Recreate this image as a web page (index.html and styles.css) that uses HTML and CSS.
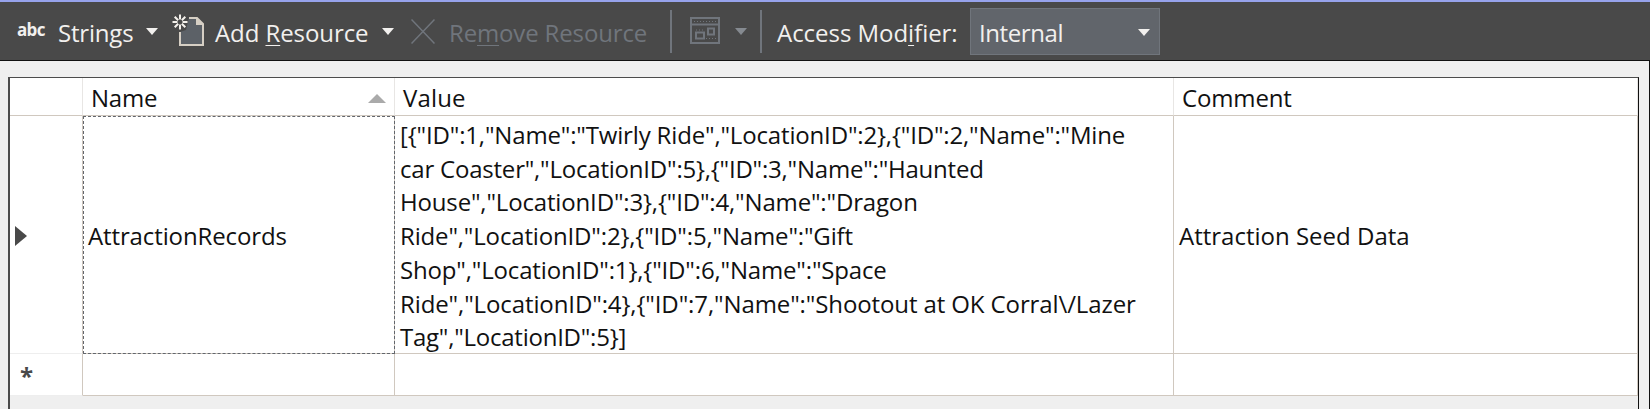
FILE: index.html
```
<!DOCTYPE html>
<html lang="en">
<head>
<meta charset="utf-8">
<title>Resources</title>
<link rel="stylesheet" href="styles.css">
</head>
<body>
<div class="window">
  <header class="toolbar">
    <span class="abc">abc</span>
    <span class="label strings">Strings</span>
    <svg class="caret caret-strings" width="12" height="7" viewBox="0 0 12 7"><path d="M0 0h12L6 7z"/></svg>
    <svg class="icon-add" width="34" height="34" viewBox="0 0 34 34">
      <path d="M8 18V31.500H31V10L25 3.500H17L14 16z" fill="#5c6167" stroke="none"/>
      <path d="M8 18V31H31V10L25 4H17" fill="none" stroke="#d6cfc4" stroke-width="2"/>
      <path d="M24 3l8 8h-8z" fill="#d6cfc4"/>
      <path d="M8 0.500v5M8 10.500v5M0.500 8h5M10.500 8h5M2.700 2.700l3.500 3.500M9.800 9.800l3.500 3.500M13.300 2.700L9.800 6.200M6.200 9.800L2.700 13.300" fill="none" stroke="#f4f1ec" stroke-width="2"/>
    </svg>
    <span class="label add">Add <u>R</u>esource</span>
    <svg class="caret caret-add" width="12" height="7" viewBox="0 0 12 7"><path d="M0 0h12L6 7z"/></svg>
    <svg class="icon-remove" width="24" height="25" viewBox="0 0 24 25"><path d="M0.500 0.500l23 24M23.500 0.500l-23 24"/></svg>
    <span class="label remove">Re<u>m</u>ove Resource</span>
    <span class="separator sep-one"></span>
    <svg class="icon-view" width="30" height="27" viewBox="0 0 30 27">
      <path d="M1 1h28v25H1zM1 7.500h28"/>
      <path d="M6 15.500h8v6H6zM18 11.500h6v6h-6z"/>
      <path d="M4 4.500h22M6 13h8M16 21.500h10" stroke-width="1" stroke-dasharray="1 2"/>
    </svg>
    <svg class="caret caret-view" width="12" height="7" viewBox="0 0 12 7"><path d="M0 0h12L6 7z"/></svg>
    <span class="separator sep-two"></span>
    <span class="label access">Access Mod<u>i</u>fier:</span>
    <div class="combo"><span class="label internal">Internal</span><svg class="caret" width="12" height="7" viewBox="0 0 12 7"><path d="M0 0h12L6 7z"/></svg></div>
  </header>
  <main class="content">
    <div class="grid">
      <div class="cell head"></div>
      <div class="cell head"><span class="t-name">Name</span><svg class="sort" width="18" height="9" viewBox="0 0 18 9"><path d="M0 9h18L9 0z"/></svg></div>
      <div class="cell head"><span class="t-value">Value</span></div>
      <div class="cell head last"><span class="t-comment">Comment</span></div>

      <div class="cell row marker"><svg width="12" height="20" viewBox="0 0 12 20"><path d="M0 0v20L12 10z"/></svg></div>
      <div class="cell row selected"><span class="t-records">AttractionRecords</span></div>
      <div class="cell row value">
        <span class="l1">[{"ID":1,"Name":"Twirly Ride","LocationID":2},{"ID":2,"Name":"Mine</span>
        <span class="l2">car Coaster","LocationID":5},{"ID":3,"Name":"Haunted</span>
        <span class="l3">House","LocationID":3},{"ID":4,"Name":"Dragon</span>
        <span class="l4">Ride","LocationID":2},{"ID":5,"Name":"Gift</span>
        <span class="l5">Shop","LocationID":1},{"ID":6,"Name":"Space</span>
        <span class="l6">Ride","LocationID":4},{"ID":7,"Name":"Shootout at OK Corral\/Lazer</span>
        <span class="l7">Tag","LocationID":5}]</span>
      </div>
      <div class="cell row last"><span class="t-seed">Attraction Seed Data</span></div>

      <div class="cell new marker star">*</div>
      <div class="cell new"></div>
      <div class="cell new"></div>
      <div class="cell new last"></div>
    </div>
  </main>
</div>
</body>
</html>
```

FILE: styles.css
```
* { box-sizing: border-box; }
body { margin: 0; font-family: "Open Sans", "Noto Sans", sans-serif; font-size: 24px; color: #111; }
.window { width: 1650px; height: 409px; overflow: hidden; background: #efefef; display: flex; flex-direction: column; }
.toolbar { height: 61px; flex: none; display: flex; align-items: flex-start; background: #494949; border-top: 2px solid #97a3ec; border-bottom: 1px solid #111; color: #f2f0ee; white-space: nowrap; }
.toolbar > * { flex: none; }
.label { line-height: 32px; margin-top: 15px; }
u { text-decoration-thickness: 1px; text-underline-offset: 3px; }
.abc { width: 41px; margin: 15px 0 0 17px; font-size: 17px; font-weight: 700; line-height: 26px; letter-spacing: -0.7px; }
.strings { width: 88px; letter-spacing: -0.2px; }
.caret { fill: #f2f0ee; margin-top: 26px; }
.icon-add { margin: 12px 0 0 14px; }
.add { width: 167px; margin-left: 9px; letter-spacing: -0.08px; }
.icon-remove { margin: 17px 0 0 17px; stroke: #70757c; stroke-width: 1.5; }
.remove { width: 221px; margin-left: 14px; color: #70757c; letter-spacing: -0.15px; }
.separator { width: 2px; height: 43px; margin-top: 8px; background: #70757c; }
.icon-view { margin: 15px 0 0 18px; fill: none; stroke: #70757c; stroke-width: 2; }
.caret-view { margin-left: 15px; fill: #858a90; }
.sep-two { margin-left: 13px; }
.access { width: 193px; margin-left: 15px; letter-spacing: -0.04px; }
.combo { width: 190px; height: 47px; margin-top: 6px; display: flex; justify-content: space-between; padding: 0 9px 0 8px; background: #61656b; border: 1px solid #70757c; }
.combo .label { margin-top: 8px; }
.combo .caret { margin-top: 20px; }
.internal { letter-spacing: -0.4px; }
.content { flex: 1; padding: 16px 10px 0 8px; border-right: 1px solid #111; }
.grid { height: 332px; display: grid; grid-template-columns: 73px 312px 779px 1fr; grid-template-rows: 38px 238px 42px; background: #efefef; border: 2px solid #4b4b4b; border-width: 1px 1px 0 2px; border-right-color: #111; }
.cell { background: #fff; border-right: 1px solid #d0c8bf; border-bottom: 1px solid #d0c8bf; display: flex; align-items: center; white-space: nowrap; line-height: 32px; }
.head { padding: 3px 0 0 8px; border-right-color: #e8e6e4; }
.row { padding: 3px 0 0 5px; }
.marker { padding-left: 5px; border-bottom-color: #eee; fill: #494949; }
.selected { outline: 1px dashed #62666c; outline-offset: -1px; }
.sort { margin-left: auto; margin-right: 8px; fill: #aaa; }
.value { flex-direction: column; align-items: flex-start; justify-content: flex-start; padding-top: 2px; line-height: 33.700px; }
.star { padding: 3px 0 0 10px; font-weight: 700; color: #494949; }
.t-name { letter-spacing: -0.2px; }
.t-value { letter-spacing: 0.15px; }
.t-comment { letter-spacing: -0.15px; }
.t-records { letter-spacing: -0.12px; }
.l1, .l3, .l4, .l5 { letter-spacing: -0.16px; }
.l2 { letter-spacing: -0.21px; }
.l6 { letter-spacing: -0.11px; }
.l7 { letter-spacing: -0.24px; }
```
